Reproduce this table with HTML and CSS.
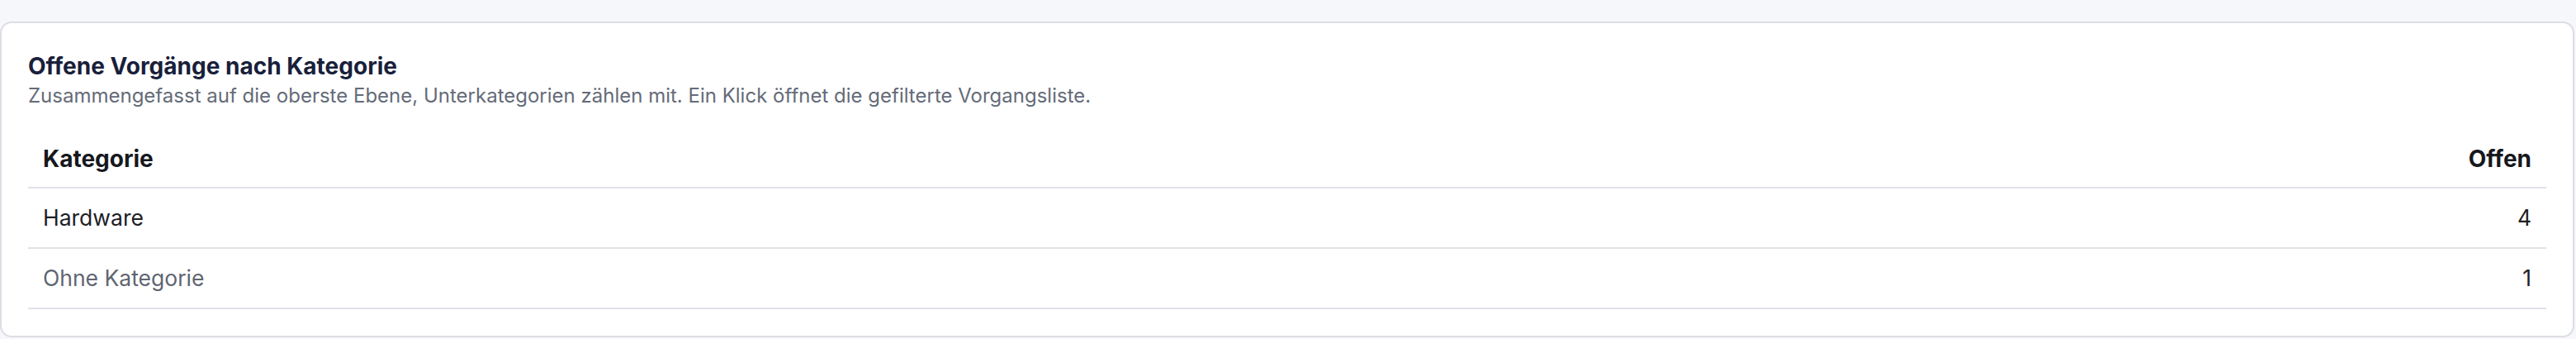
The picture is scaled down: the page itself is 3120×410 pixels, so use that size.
FILE: index.html
```html
<!DOCTYPE html>
<html lang="de">
<head>
<meta charset="utf-8">
<title>Offene Vorgänge nach Kategorie</title>
<link rel="stylesheet" href="styles.css">
</head>
<body>
  <section class="card">
    <header class="card-head">
      <h2 class="card-title">Offene Vorgänge nach Kategorie</h2>
      <p class="card-sub">Zusammengefasst auf die oberste Ebene, Unterkategorien zählen mit. Ein Klick öffnet die gefilterte Vorgangsliste.</p>
    </header>
    <table class="cat-table">
      <thead>
        <tr><th class="col-name">Kategorie</th><th class="col-num">Offen</th></tr>
      </thead>
      <tbody>
        <tr><td class="col-name">Hardware</td><td class="col-num">4</td></tr>
        <tr class="muted"><td class="col-name">Ohne Kategorie</td><td class="col-num">1</td></tr>
      </tbody>
    </table>
  </section>
</body>
</html>
```
FILE: styles.css
```css
html, body {
  margin: 0;
  padding: 0;
}
body {
  background: #f6f7fb;
  font-family: Inter, "Noto Sans", "Liberation Sans", sans-serif;
  padding: 26px 2px 0 0;
  height: 410px;
  box-sizing: border-box;
}
.card {
  background: #ffffff;
  border: 2px solid #dcdee4;
  border-radius: 14px;
  padding: 32px;
}
.card-head {
  margin-bottom: 24px;
}
.card-title {
  margin: 0;
  font-size: 28px;
  line-height: 40px;
  font-weight: 700;
  color: #18203a;
}
.card-sub {
  margin: 0;
  font-size: 24px;
  line-height: 32px;
  color: #646b78;
}
.cat-table {
  width: 100%;
  border-collapse: collapse;
}
.cat-table th,
.cat-table td {
  padding: 16px 18px;
  border-bottom: 2px solid #e1e2e7;
}
.cat-table th {
  padding-bottom: 14px;
  font-size: 28px;
  line-height: 40px;
  font-weight: 700;
  color: #16181d;
}
.cat-table td {
  font-size: 26.5px;
  line-height: 39px;
  color: #1d2026;
}
.col-name { text-align: left; }
.col-num { text-align: right; }
.cat-table tr.muted td.col-name {
  color: #5f6571;
}
```
